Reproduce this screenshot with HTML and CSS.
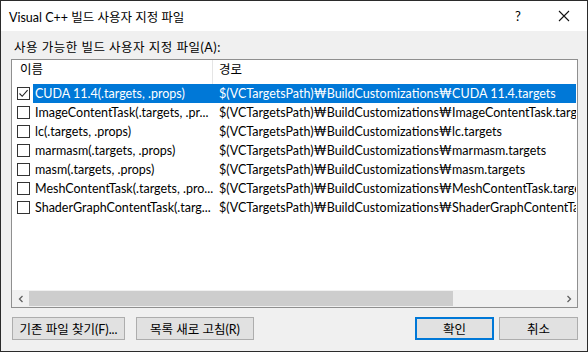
FILE: index.html
```html
<!DOCTYPE html>
<html lang="ko">
<head>
<meta charset="utf-8">
<title>Visual C++ 빌드 사용자 지정 파일</title>
<link rel="stylesheet" href="styles.css">
</head>
<body>
<div class="window">
  <div class="titlebar">
    <span class="title">Visual C++ 빌드 사용자 지정 파일</span>
    <span class="tb-help">?</span>
    <span class="tb-close"><svg width="12" height="12" viewBox="0 0 12 12"><path d="M1 1 L11 11 M11 1 L1 11" stroke="#111" stroke-width="1.1" fill="none"/></svg></span>
  </div>
  <div class="content">
    <div class="label">사용 가능한 빌드 사용자 지정 파일(A):</div>
    <div class="listbox">
      <div class="header">
        <div class="col1 hcell">이름</div>
        <div class="col2 hcell">경로</div>
      </div>
      <div class="rows">
        <div class="row selected">
          <span class="cb checked"><svg width="11" height="11" viewBox="0 0 11 11"><path d="M1.5 5.5 L4.2 8.3 L9.6 2.2" stroke="#222" stroke-width="1.1" fill="none"/></svg></span>
          <span class="c1">CUDA 11.4(.targets, .props)</span>
          <span class="c2">$(VCTargetsPath)₩BuildCustomizations₩CUDA 11.4.targets</span>
        </div>
        <div class="row">
          <span class="cb"></span>
          <span class="c1">ImageContentTask(.targets, .pr...</span>
          <span class="c2">$(VCTargetsPath)₩BuildCustomizations₩ImageContentTask.targets</span>
        </div>
        <div class="row">
          <span class="cb"></span>
          <span class="c1">lc(.targets, .props)</span>
          <span class="c2">$(VCTargetsPath)₩BuildCustomizations₩lc.targets</span>
        </div>
        <div class="row">
          <span class="cb"></span>
          <span class="c1">marmasm(.targets, .props)</span>
          <span class="c2">$(VCTargetsPath)₩BuildCustomizations₩marmasm.targets</span>
        </div>
        <div class="row">
          <span class="cb"></span>
          <span class="c1">masm(.targets, .props)</span>
          <span class="c2">$(VCTargetsPath)₩BuildCustomizations₩masm.targets</span>
        </div>
        <div class="row">
          <span class="cb"></span>
          <span class="c1">MeshContentTask(.targets, .pro...</span>
          <span class="c2">$(VCTargetsPath)₩BuildCustomizations₩MeshContentTask.targets</span>
        </div>
        <div class="row">
          <span class="cb"></span>
          <span class="c1">ShaderGraphContentTask(.targ...</span>
          <span class="c2">$(VCTargetsPath)₩BuildCustomizations₩ShaderGraphContentTask.targets</span>
        </div>
      </div>
      <div class="hscroll">
        <span class="arrow"><svg width="8" height="8" viewBox="0 0 8 8"><path d="M5.5 1 L2.5 4 L5.5 7" stroke="#606060" stroke-width="1.3" fill="none"/></svg></span>
        <div class="track"><div class="thumb"></div></div>
        <span class="arrow"><svg width="8" height="8" viewBox="0 0 8 8"><path d="M2.5 1 L5.5 4 L2.5 7" stroke="#606060" stroke-width="1.3" fill="none"/></svg></span>
      </div>
    </div>
    <div class="buttons">
      <div class="left">
        <button class="btn btn-find">기존 파일 찾기(F)...</button>
        <button class="btn btn-refresh">목록 새로 고침(R)</button>
      </div>
      <div class="right">
        <button class="btn btn-ok">확인</button>
        <button class="btn btn-cancel">취소</button>
      </div>
    </div>
  </div>
</div>
</body>
</html>
```

FILE: styles.css
```css
* { box-sizing: border-box; }
html, body { margin: 0; padding: 0; }
body {
  width: 588px;
  height: 352px;
  font-family: Lato, "Noto Sans CJK KR", sans-serif;
  font-size: 12.5px;
  color: #000;
  overflow: hidden;
}
.window {
  width: 588px;
  height: 352px;
  border: 1px solid #2b2b2b;
  display: flex;
  flex-direction: column;
  background: #f0f0f0;
}
.titlebar {
  height: 30px;
  background: #fff;
  display: flex;
  align-items: center;
  padding-left: 8px;
}
.title { flex: 1; }
.tb-help {
  width: 46px;
  text-align: center;
  font-size: 13px;
}
.tb-close {
  width: 46px;
  display: flex;
  justify-content: center;
  align-items: center;
}
.content {
  flex: 1;
  display: flex;
  flex-direction: column;
  padding: 0 9px 0 10px;
}
.label {
  height: 28px;
  line-height: 16px;
  padding-top: 9px;
  padding-left: 3px;
  letter-spacing: 0.5px;
}
.listbox {
  height: 249px;
  border: 1px solid #8f8f8f;
  background: #fff;
  display: flex;
  flex-direction: column;
}
.header {
  height: 24px;
  display: flex;
}
.hcell {
  line-height: 20px;
  padding-left: 8px;
}
.col1 { width: 201px; border-right: 1px solid #e5e5e5; }
.col2 { flex: 1; padding-left: 6px; }
.rows { flex: 1; overflow: hidden; }
.row {
  height: 19px;
  display: flex;
  align-items: center;
  white-space: nowrap;
  overflow: hidden;
}
.cb {
  width: 13px;
  height: 13px;
  border: 1px solid #333;
  background: #fff;
  margin-left: 5px;
  margin-right: 3px;
  flex: none;
  display: flex;
  align-items: center;
  justify-content: center;
}
.c1 {
  width: 180px;
  flex: none;
  padding-left: 2px;
  height: 19px;
  line-height: 19px;
  overflow: hidden;
}
.c2 {
  flex: 1;
  padding-left: 6px;
  height: 19px;
  line-height: 19px;
  overflow: hidden;
  margin-right: 1px;
}
.row.selected .c1, .row.selected .c2 {
  background: #0078d7;
  color: #fff;
}
.hscroll {
  height: 17px;
  display: flex;
  align-items: center;
  background: #f0f0f0;
}
.arrow {
  width: 17px;
  height: 17px;
  display: flex;
  align-items: center;
  justify-content: center;
  flex: none;
}
.track {
  flex: 1;
  height: 17px;
  display: flex;
  align-items: center;
}
.thumb {
  width: 424px;
  height: 15px;
  background: #cdcdcd;
}
.buttons {
  display: flex;
  justify-content: space-between;
  padding-top: 9px;
  padding-left: 1px;
}
.left, .right { display: flex; }
.left { gap: 11px; }
.right { gap: 5px; }
.btn {
  height: 23px;
  border: 1px solid #adadad;
  background: #e1e1e1;
  font-family: Lato, "Noto Sans CJK KR", sans-serif;
  font-size: 12.5px;
  color: #000;
  padding: 0;
  margin: 0;
}
.btn-find { width: 113px; }
.btn-refresh { width: 118px; }
.btn-ok { width: 79px; border: 2px solid #0078d7; }
.btn-cancel { width: 79px; }
```
